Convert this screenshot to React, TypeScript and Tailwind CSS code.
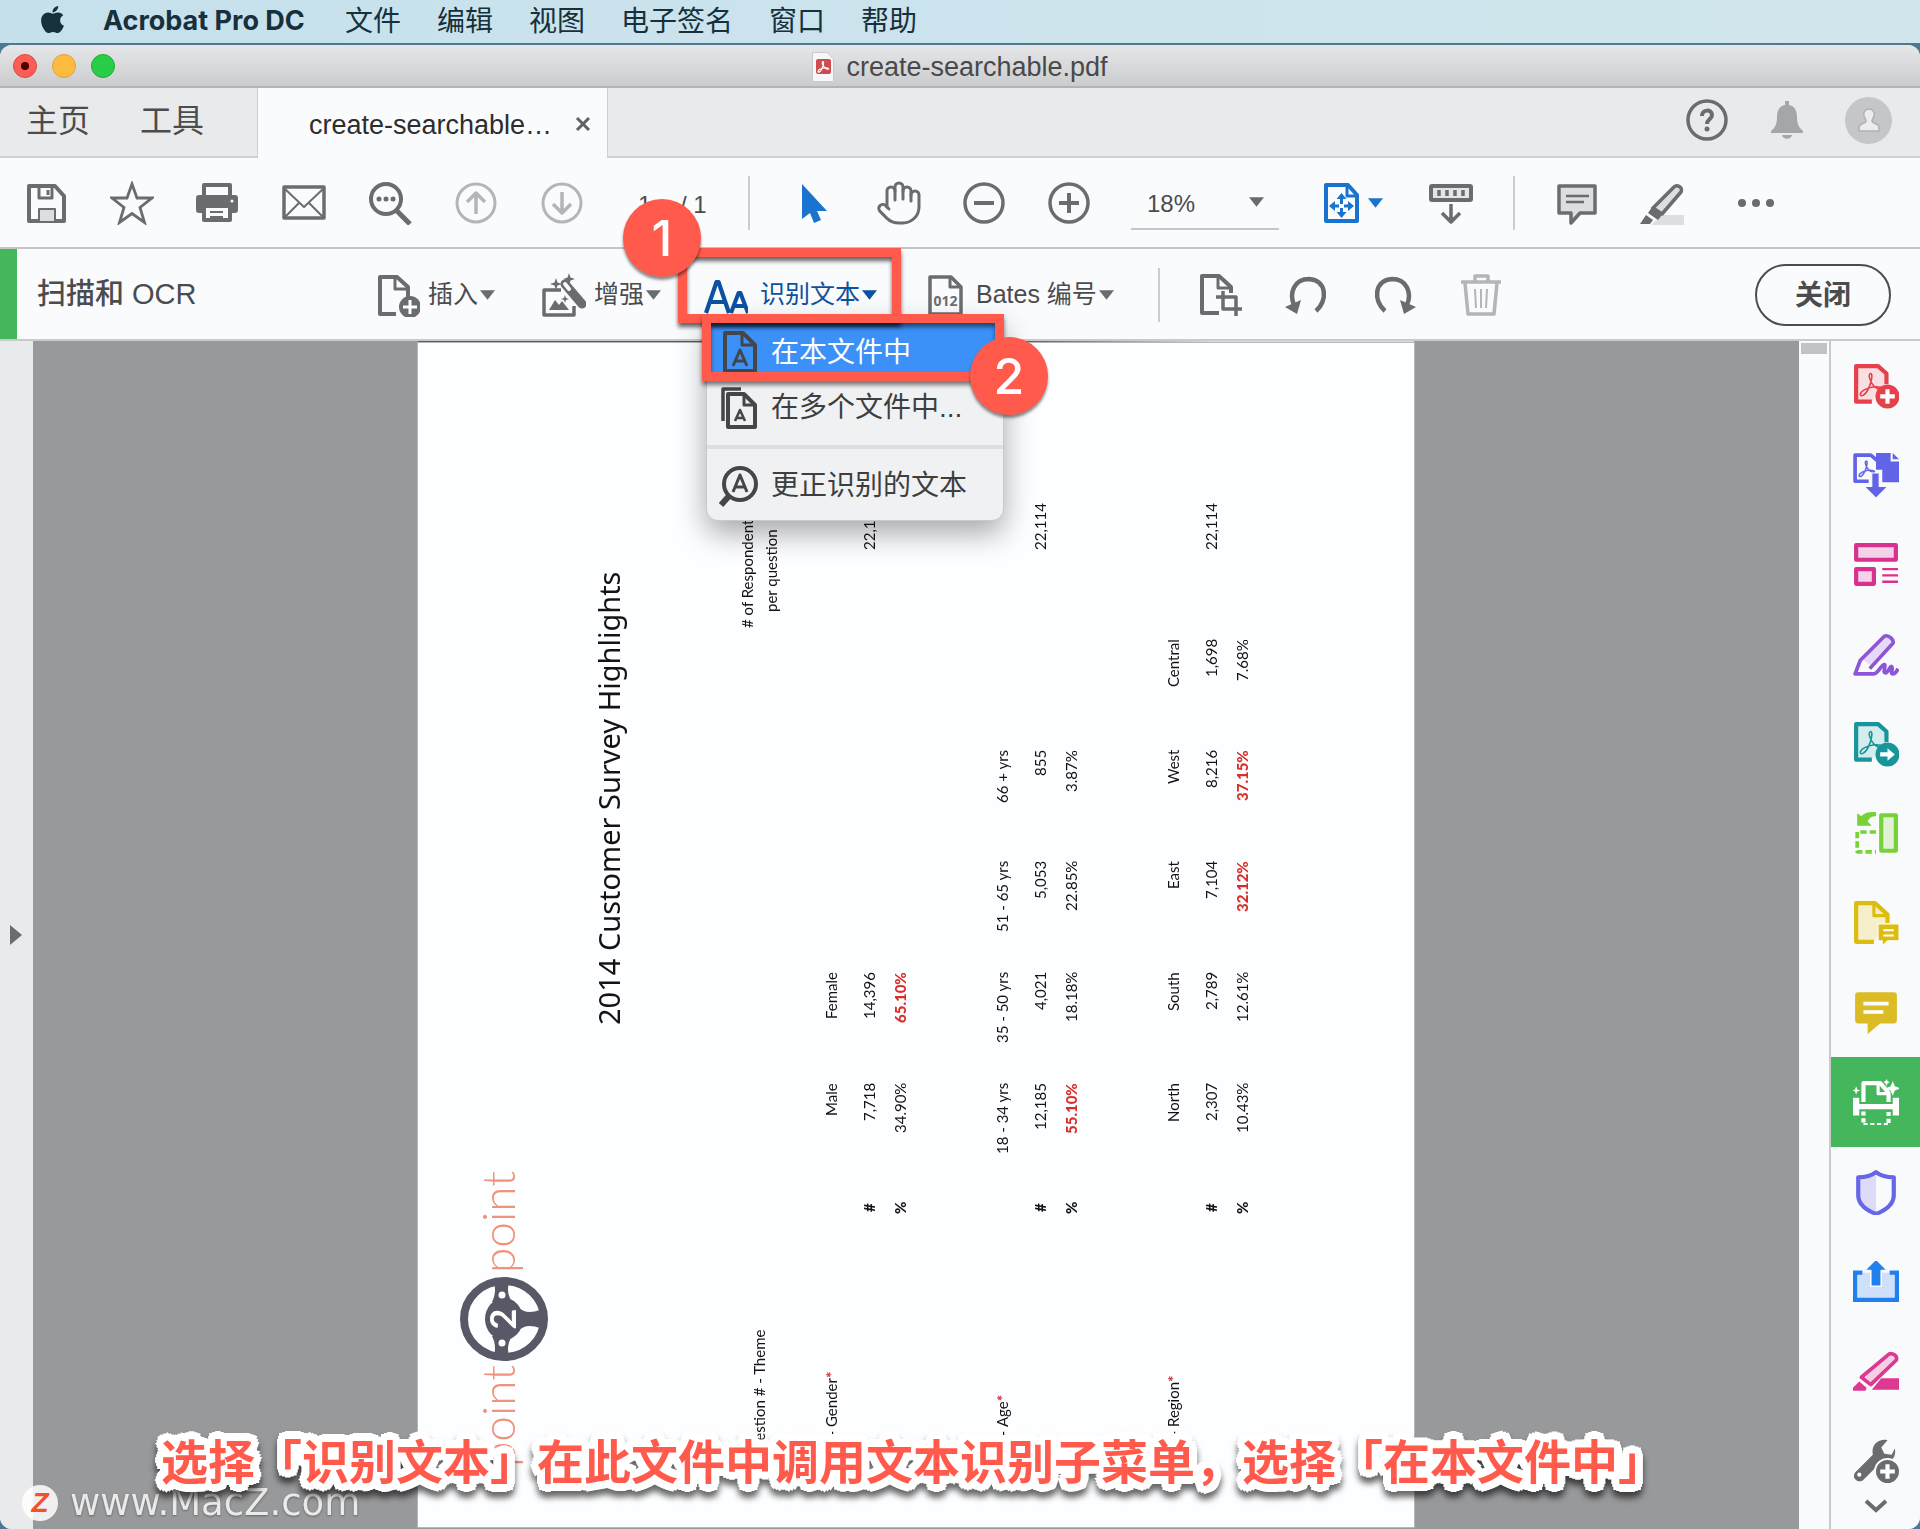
import type { ReactNode } from "react";
import { Hand } from "lucide-react";
import { FaApple } from "react-icons/fa";

const menus = ["文件", "编辑", "视图", "电子签名", "窗口", "帮助"];

function Icon({
	children,
	className = "size-11",
}: {
	children: ReactNode;
	className?: string;
}) {
	return (
		<svg
			viewBox="0 0 44 44"
			fill="none"
			stroke="currentColor"
			strokeWidth="4"
			strokeLinejoin="round"
			aria-hidden="true"
			className={`shrink-0 ${className}`}
		>
			{children}
		</svg>
	);
}

function Caret({ className = "" }: { className?: string }) {
	return (
		<svg
			viewBox="0 0 16 10"
			fill="currentColor"
			aria-hidden="true"
			className={`h-[10px] w-[15px] shrink-0 ${className}`}
		>
			<path d="M0 0h16L8 10z" />
		</svg>
	);
}

function IconButton({
	label,
	children,
	className = "",
}: {
	label: string;
	children: ReactNode;
	className?: string;
}) {
	return (
		<button
			type="button"
			aria-label={label}
			className={`flex shrink-0 items-center justify-center ${className}`}
		>
			{children}
		</button>
	);
}

// Acrobat の三つ葉マーク
const trefoil =
	"M14 5c-3 0-1 8 3 12 3 3 7 4 8 3s-3-3-9-2c-6 1-12 4-12 7s5 1 8-6c3-6 4-14 2-14z";

function MenuBar() {
	return (
		<header className="flex h-[43px] items-center bg-gradient-to-r from-[#c6e1ec] to-[#d1e6ec] pl-[37px] text-[#16303c]">
			<FaApple className="mb-1 size-[31px]" aria-hidden="true" />
			<span className="ml-[35px] w-[242px] font-[Inter,'Liberation_Sans',sans-serif] text-[27px] font-bold whitespace-nowrap">
				Acrobat Pro DC
			</span>
			<nav className="flex gap-9 text-[28px] whitespace-nowrap">
				{menus.map((m) => (
					<button key={m} type="button">
						{m}
					</button>
				))}
			</nav>
		</header>
	);
}

function TitleBar() {
	return (
		<div className="grid h-[43px] grid-cols-[1fr_auto_1fr] items-center border-b-2 border-[#b3b4b6] bg-gradient-to-b from-[#e6e7e8] to-[#cbccce]">
			<div className="flex gap-[15px] pl-[13px]">
				<button
					type="button"
					aria-label="关闭窗口"
					className="flex size-6 items-center justify-center rounded-full border border-[#e0473f] bg-[#fc5d57]"
				>
					<span className="size-2 rounded-full bg-[#4d0000]" />
				</button>
				<button
					type="button"
					aria-label="最小化"
					className="size-6 rounded-full border border-[#e0a135] bg-[#fdbc3f]"
				/>
				<button
					type="button"
					aria-label="缩放"
					className="size-6 rounded-full border border-[#1eab33] bg-[#28cd48]"
				/>
			</div>
			<div className="flex items-center gap-3 pt-0.5 text-[27px] leading-8 text-[#48494b]">
				<svg viewBox="0 0 22 30" className="h-[30px] w-[22px]" aria-hidden="true">
					<path d="M.5.5h15l6 7v22H.5z" fill="#f7f7f7" stroke="#c9c9cb" />
					<rect x="4" y="7" width="15" height="15" rx="2" fill="#cf4b4e" />
					<path
						d={trefoil}
						transform="translate(4 7) scale(.5)"
						fill="none"
						stroke="#fff"
						strokeWidth="2.5"
					/>
				</svg>
				<h1>create-searchable.pdf</h1>
			</div>
			<div />
		</div>
	);
}

function TabBar() {
	return (
		<div className="flex h-[70px] bg-[#e9eaec]">
			<div className="flex w-[257px] shrink-0 items-center gap-[50px] border-b-2 border-[#d0d1d3] pb-0.5 pl-[26px] text-[32px] text-[#4b4c4e]">
				<button type="button">主页</button>
				<button type="button">工具</button>
			</div>
			<div className="flex w-[351px] shrink-0 items-center border-x border-[#cfd0d2] bg-[#fafbfc] pt-1 pl-[51px] text-[27px] text-[#2c2d2f]">
				<span>create-searchable…</span>
				<button type="button" aria-label="关闭标签页" className="mr-4 ml-auto pb-0.5">
					<svg
						viewBox="0 0 16 16"
						className="size-4"
						stroke="#616264"
						strokeWidth="3"
						aria-hidden="true"
					>
						<path d="M2 2l12 12M14 2L2 14" />
					</svg>
				</button>
			</div>
			<div className="flex flex-1 items-center justify-end gap-9 border-b-2 border-[#d0d1d3] pr-7 pb-1 text-[#6b6c6f]">
				<IconButton label="帮助">
					<Icon>
						<circle cx="22" cy="22" r="19" strokeWidth="3.5" />
						<path
							d="M17 18c0-7 10-7 10-1 0 4-5 4-5 9"
							strokeWidth="4"
							strokeLinejoin="miter"
						/>
						<circle cx="22" cy="31" r="2.5" fill="currentColor" stroke="none" />
					</Icon>
				</IconButton>
				<IconButton label="通知" className="text-[#a5a6a9]">
					<Icon>
						<path
							d="M20 3h4v4c6 1 8 6 8 12 0 7 2 11 6 14v2H6v-2c4-3 6-7 6-14 0-6 2-11 8-12zM17 37h10c-1 5-9 5-10 0z"
							fill="currentColor"
							stroke="none"
						/>
					</Icon>
				</IconButton>
				<IconButton label="账户">
					<span className="flex size-[47px] items-center justify-center rounded-full bg-[#c5c6c8]">
						<svg viewBox="0 0 24 26" className="h-[26px] w-6" aria-hidden="true">
							<path
								d="M12 2c4 0 6 3 5 7-.6 2.500-2 3-2 5 0 3 7 2 7 6v4H2v-4c0-4 7-3 7-6 0-2-1.400-2.500-2-5-1-4 1-7 5-7z"
								fill="#ececee"
								stroke="#b0b1b3"
								strokeWidth="1.500"
							/>
						</svg>
					</span>
				</IconButton>
			</div>
		</div>
	);
}

function Divider({ className = "" }: { className?: string }) {
	return <div className={`h-[54px] w-0.5 shrink-0 bg-[#cbccce] ${className}`} />;
}

function Toolbar() {
	return (
		<div className="flex h-[91px] items-center border-b-2 border-[#c4c5c7] bg-[#fafbfd] pl-6 text-[#6b6c6f]">
			<div className="flex gap-[42px]">
				<IconButton label="保存">
					<Icon>
						<path d="M5 5h26l9 10v25H5z" />
						<path d="M15 5v12h13V5M24 9v5" strokeWidth="3" />
						<path d="M15 40V28h16v12" fill="#dddee0" strokeWidth="2" />
					</Icon>
				</IconButton>
				<IconButton label="收藏">
					<Icon>
						<path
							d="M22 3l5 14h15L30 26.500l4.500 15L22 32.500 9.500 41.500l4.500-15L2 17h15z"
							strokeWidth="2.800"
							strokeLinejoin="miter"
						/>
					</Icon>
				</IconButton>
				<IconButton label="打印">
					<Icon>
						<path d="M8 18V4h26v14" />
						<rect x="0" y="14" width="42" height="18" rx="3" fill="currentColor" stroke="none" />
						<path d="M8 25h26v14H8z" fill="#fafbfd" />
						<path d="M14 31h13M14 36h13" strokeWidth="2" />
						<circle cx="36" cy="20" r="1.500" fill="#fff" stroke="none" />
					</Icon>
				</IconButton>
				<IconButton label="电子邮件">
					<Icon>
						<rect x="2" y="6" width="40" height="31" strokeWidth="3.500" />
						<path d="M3 8l19 18L41 8M3 36l14-14M41 36L27 22" strokeWidth="2" />
					</Icon>
				</IconButton>
				<IconButton label="查找">
					<Icon>
						<circle cx="18" cy="18" r="15" />
						<path d="M28 29l14 14" strokeWidth="5" />
						<g fill="currentColor" stroke="none">
							<circle cx="11" cy="18" r="2.500" />
							<circle cx="18" cy="18" r="2.500" />
							<circle cx="25" cy="18" r="2.500" />
						</g>
					</Icon>
				</IconButton>
				<IconButton label="上一页" className="text-[#b4b5b7]">
					<Icon>
						<circle cx="22" cy="22" r="19" strokeWidth="3" />
						<path d="M22 33V13M13 21l9-9 9 9" strokeWidth="3.500" />
					</Icon>
				</IconButton>
				<IconButton label="下一页" className="text-[#b4b5b7]">
					<Icon>
						<circle cx="22" cy="22" r="19" strokeWidth="3" />
						<path d="M22 11v20M13 23l9 9 9-9" strokeWidth="3.500" />
					</Icon>
				</IconButton>
			</div>
			<div className="ml-[54px] flex w-[110px] items-center pt-1 text-[24px] text-[#4b4c4e]">
				<input
					aria-label="页码"
					defaultValue="1"
					className="w-[42px] bg-transparent"
				/>
				<span>/ 1</span>
			</div>
			<Divider />
			<div className="ml-[42px] flex gap-[41px]">
				<IconButton label="选择工具" className="text-[#1a73cf]">
					<Icon>
						<path
							d="M10 3v35l8-6 4 10 7-3-4-9h10z"
							fill="currentColor"
							stroke="none"
						/>
					</Icon>
				</IconButton>
				<IconButton label="手形工具">
					<Hand className="-mx-0.5 size-[48px]" strokeWidth={1.5} />
				</IconButton>
				<IconButton label="缩小">
					<Icon>
						<circle cx="22" cy="22" r="19" strokeWidth="3.500" />
						<path d="M12 22h20" />
					</Icon>
				</IconButton>
				<IconButton label="放大">
					<Icon>
						<circle cx="22" cy="22" r="19" strokeWidth="3.500" />
						<path d="M12 22h20M22 12v20" />
					</Icon>
				</IconButton>
			</div>
			<div className="ml-10 grid h-[54px] w-[148px] shrink-0 grid-cols-[1fr_auto] items-center border-b-2 border-[#c4c5c7] pr-[15px]">
				<select
					aria-label="缩放比例"
					className="col-span-2 col-start-1 row-start-1 w-full appearance-none bg-transparent pt-1 pl-4 text-[24px] text-[#4b4c4e]"
				>
					<option>18%</option>
				</select>
				<span className="pointer-events-none col-start-2 row-start-1">
					<Caret />
				</span>
			</div>
			<button
				type="button"
				aria-label="适合页面"
				className="ml-[41px] flex shrink-0 items-center gap-1 text-[#1a73cf]"
			>
				<Icon>
					<path d="M6 4h22l9 10v26H6z" />
					<path d="M27 4v11h10" strokeWidth="3" />
					<g fill="currentColor" stroke="none">
						<path d="M21.500 12l5 6h-3.500v5h-3v-5h-3.500zM21.500 37l5-6h-3.500v-4h-3v4h-3.500zM9 25l6-5v3.500h4v3h-4V30zM34 25l-6-5v3.500h-4v3h4V30z" />
					</g>
				</Icon>
				<Caret />
			</button>
			<IconButton label="滚动模式" className="ml-[46px]">
				<Icon>
					<rect x="2" y="5" width="40" height="14" rx="1" fill="#e4e5e7" />
					<path d="M10 9v6M18 9v6M26 9v6M34 9v6" strokeWidth="3.500" />
					<path d="M22 23v18M13 32l9 9 9-9" strokeWidth="3.500" />
				</Icon>
			</IconButton>
			<Divider className="ml-10" />
			<IconButton label="添加附注" className="ml-10">
				<Icon>
					<path d="M4 5h36v27H25l-9 10V32H4z" fill="#dddee0" strokeWidth="3.500" />
					<path d="M11 15h23M11 21h18" strokeWidth="2.500" />
				</Icon>
			</IconButton>
			<IconButton label="高亮文本" className="ml-[41px]">
				<Icon>
					<path d="M22 34h22v10H11z" fill="#dddee0" stroke="none" />
					<path d="M34 6c3-3 9 0 7 5L22 33l-9-6z" fill="#dddee0" strokeWidth="3.500" />
					<path d="M12 26l10 8-4 5-10-7zM6 34l7 5-3 4H0z" fill="currentColor" stroke="none" />
				</Icon>
			</IconButton>
			<IconButton label="更多" className="ml-[50px]">
				<Icon>
					<g fill="currentColor" stroke="none">
						<circle cx="8" cy="22" r="4" />
						<circle cx="22" cy="22" r="4" />
						<circle cx="36" cy="22" r="4" />
					</g>
				</Icon>
			</IconButton>
		</div>
	);
}

function Badge({ n, className }: { n: number; className: string }) {
	return (
		<span
			className={`absolute z-30 flex size-[78px] items-center justify-center rounded-full bg-[#ff5a4c] font-[Inter,'Liberation_Sans',sans-serif] text-[50px] font-medium text-white shadow-[0_3px_3px_rgba(0,0,0,0.45)] ${className}`}
		>
			{n}
		</span>
	);
}

function RecognizeMenu() {
	return (
		<div className="absolute top-[69px] left-[2px] z-10 w-[298px] rounded-b-xl border border-[#c9cacc] bg-[#f0f1f3] pb-[7px] text-[28px] leading-8 whitespace-nowrap text-[#3d3e40] shadow-[0_12px_30px_rgba(0,0,0,0.35)]">
			<button
				type="button"
				className="flex h-[62px] w-full items-center gap-2 bg-[#3b91f8] pt-1.5 pl-3 text-white"
			>
				<Icon className="mb-1 size-11 text-[#454648]">
					<path d="M6 4h18l12 12v26H6z" />
					<path d="M23 4v12h13" strokeWidth="3" />
					<path d="M14 37l7-16 7 16M17 32h9" strokeWidth="3" />
				</Icon>
				在本文件中
			</button>
			<button
				type="button"
				className="flex h-[54px] w-full items-center gap-2 pl-3"
			>
				<Icon className="size-11 text-[#454648]">
					<path d="M4 35V3h18" strokeWidth="3.500" />
					<path d="M9 8h16l11 11v22H9z" />
					<path d="M25 8v11h11" strokeWidth="3" />
					<path d="M16 35l5-11 5 11M18 32h7" strokeWidth="2.500" />
				</Icon>
				在多个文件中...
			</button>
			<hr className="my-[10px] h-1 border-0 bg-[#dedfe1]" />
			<button
				type="button"
				className="flex h-[54px] w-full items-center gap-2 pl-3"
			>
				<Icon className="size-11 text-[#454648]">
					<circle cx="21" cy="20" r="16" />
					<path d="M10 32L2 41" strokeWidth="6" />
					<path d="M14 28l7-17 7 17M17 23h8" strokeWidth="3" />
				</Icon>
				更正识别的文本
			</button>
		</div>
	);
}

function OcrBar() {
	const gray = "text-[#6b6c6f]";
	return (
		<div className="flex h-[92px] border-b-2 border-[#c9cacc] bg-[#fafbfd] text-[25px] whitespace-nowrap text-[#4b4c4e]">
			<div className="w-[17px] shrink-0 bg-[#44b65b]" />
			<div className="flex flex-1 items-center pt-0.5 pr-[29px] pl-5">
				<h2 className="w-[339px] shrink-0 text-[29px] font-medium">扫描和 OCR</h2>
				<button type="button" className="flex w-[166px] shrink-0 items-center">
					<Icon className={`mr-2 size-11 ${gray}`}>
						<path d="M20 41H4V4h17l11 10v10" />
						<path d="M19 4v12h13" strokeWidth="3" />
						<circle cx="34" cy="34" r="11" fill="currentColor" stroke="none" />
						<path d="M34 27v14M27 34h14" stroke="#fff" strokeWidth="3" />
					</Icon>
					插入
					<Caret className={`ml-0.5 ${gray}`} />
				</button>
				<button type="button" className="flex w-[162px] shrink-0 items-center">
					<Icon className={`mr-2 size-11 ${gray}`}>
						<path d="M19 17H2v25h30v-9" strokeWidth="3.500" />
						<path d="M7 37l6-10 4 5 3-4 7 9z" fill="currentColor" stroke="none" />
						<path d="M23 11l17 20" strokeWidth="9" strokeLinecap="round" />
						<path d="M23 11l4 5" stroke="#fafbfd" strokeWidth="4" strokeLinecap="round" />
						<path
							d="M27 0l1.500 4.500L33 6l-4.500 1.500L27 12l-1.500-4.500L21 6l4.500-1.500zM14 5l1.500 4.500L20 11l-4.500 1.500L14 17l-1.500-4.500L8 11l4.500-1.500zM23 22l1 3 3 1-3 1-1 3-1-3-3-1 3-1z"
							fill="currentColor"
							stroke="none"
						/>
					</Icon>
					增强
					<Caret className={`ml-0.5 ${gray}`} />
				</button>
				<div className="relative -mt-0.5 flex w-[222px] shrink-0 self-stretch text-[#0d52a0]">
					<button type="button" className="flex items-center pt-0.5">
						<Icon className="mr-3 size-11">
							<path d="M2 40L12.500 9h2L25 40M6 29h15" strokeWidth="4.200" />
							<path d="M27 40l7.500-20h2L44 40M30 33h11" strokeWidth="4" />
						</Icon>
						识别文本
						<Caret className="ml-0.5" />
					</button>
					<RecognizeMenu />
					<span className="pointer-events-none absolute -top-px -left-[26px] z-20 h-[75px] w-[223px] border-[9px] border-[#ff5a4c] drop-shadow-[0_4px_2px_rgba(0,0,0,0.6)]" />
					<span className="pointer-events-none absolute top-[65px] -left-0.5 z-20 h-[67px] w-[302px] border-[9px] border-[#ff5a4c] drop-shadow-[0_4px_2px_rgba(0,0,0,0.5)]" />
					<Badge n={1} className="-top-[50px] -left-[81px]" />
					<Badge n={2} className="top-[88px] left-[266px]" />
				</div>
				<button type="button" className="flex shrink-0 items-center">
					<Icon className={`mr-1.5 size-11 ${gray}`}>
						<path d="M4 4h21l10 10v27H4z" strokeWidth="3.500" />
						<path d="M24 4v10h11" strokeWidth="3" />
						<text
							x="19.500"
							y="33"
							textAnchor="middle"
							fill="currentColor"
							stroke="none"
							className="font-['Noto_Sans',sans-serif] text-[14px] font-bold"
						>
							012
						</text>
					</Icon>
					Bates 编号
					<Caret className={`ml-0.5 ${gray}`} />
				</button>
				<Divider className="ml-11" />
				<div className={`ml-[38px] flex gap-[43px] pb-0.5 ${gray}`}>
					<IconButton label="裁剪页面">
						<Icon>
							<path d="M21 41H4V4h17l12 11v6" />
							<path d="M20 4v12h13" strokeWidth="3" />
							<path d="M25 19v18h19M18 25h20v19" strokeWidth="3.500" />
						</Icon>
					</IconButton>
					<IconButton label="逆时针旋转">
						<Icon>
							<path d="M31 39C43 29 42 8 24 7 9 7 4 21 9 33" strokeWidth="4.500" />
							<path d="M0 35l16-7-4 14z" fill="currentColor" stroke="none" />
						</Icon>
					</IconButton>
					<IconButton label="顺时针旋转">
						<Icon>
							<path d="M13 39C1 29 2 8 20 7c15 0 20 14 15 26" strokeWidth="4.500" />
							<path d="M44 35l-16-7 4 14z" fill="currentColor" stroke="none" />
						</Icon>
					</IconButton>
					<IconButton label="删除页面" className="text-[#b4b5b7]">
						<Icon>
							<path d="M2 10h40M16 9V4h13v5M6 11l3 31h26l3-31" strokeWidth="3.500" />
							<path d="M16 17l1 19M22 17v19M28 17l-1 19" strokeWidth="2" />
						</Icon>
					</IconButton>
				</div>
				<button
					type="button"
					className="ml-auto h-[62px] w-[136px] shrink-0 rounded-full border-2 border-[#4b4c4e] pt-0.5 text-[28px] font-bold"
				>
					关闭
				</button>
			</div>
		</div>
	);
}

type Cell = { head: string; count: string; pct: string; hot?: boolean };
const none: Cell = { head: "", count: "", pct: "" };

const questions: { no: number; name: string; cells: Cell[] }[] = [
	{
		no: 1,
		name: "Gender",
		cells: [
			{ head: "Male", count: "7,718", pct: "34.90%" },
			{ head: "Female", count: "14,396", pct: "65.10%", hot: true },
			none,
			none,
			none,
		],
	},
	{
		no: 2,
		name: "Age",
		cells: [
			{ head: "18 - 34 yrs", count: "12,185", pct: "55.10%", hot: true },
			{ head: "35 - 50 yrs", count: "4,021", pct: "18.18%" },
			{ head: "51 - 65 yrs", count: "5,053", pct: "22.85%" },
			{ head: "66 + yrs", count: "855", pct: "3.87%" },
			none,
		],
	},
	{
		no: 3,
		name: "Region",
		cells: [
			{ head: "North", count: "2,307", pct: "10.43%" },
			{ head: "South", count: "2,789", pct: "12.61%" },
			{ head: "East", count: "7,104", pct: "32.12%", hot: true },
			{ head: "West", count: "8,216", pct: "37.15%", hot: true },
			{ head: "Central", count: "1,698", pct: "7.68%" },
		],
	},
];

function Wheel() {
	return (
		<svg
			viewBox="0 0 88 84"
			className="h-[84px] w-[88px] shrink-0 rotate-180"
			aria-hidden="true"
		>
			<ellipse cx="44" cy="42" rx="40" ry="38" fill="none" stroke="#595867" strokeWidth="8" />
			<ellipse cx="44" cy="42" rx="19" ry="21" fill="#595867" />
			<path
				d="M34 5h15c-2 8-1 13 3 20H32c3-6 4-12 2-20zM34 79h15c-2-8-1-13 3-20H32c3 6 4 12 2 20zM58 30c6 6 13 6 22 3v18c-9-3-16-3-22 3z"
				fill="#595867"
			/>
			<circle cx="42" cy="18" r="3.500" fill="#fdfeff" />
			<circle cx="42" cy="66" r="3.500" fill="#fdfeff" />
			<text
				x="0"
				y="0"
				transform="translate(56 42) rotate(-90)"
				textAnchor="middle"
				fill="#fff"
				className="font-[Lato,sans-serif] text-[36px] font-bold [writing-mode:horizontal-tb]"
			>
				2
			</text>
		</svg>
	);
}

// 横向きにスキャンされたページ。縦書き + 180度回転で下から上へ読む
function ScannedPage() {
	return (
		<article className="mb-0.5 w-[996px] shrink-0 rotate-180 overflow-hidden bg-[#fdfeff] pt-[60px] pr-9 font-[Lato,'Noto_Sans',sans-serif] text-[15px] text-[#151213] shadow-[0_0_0_1px_#b5b6b8] [writing-mode:vertical-rl]">
			<div className="flex w-[100px] items-center gap-1 text-[46px] leading-none font-light text-[#f0937d]">
				<span className="pl-3">point</span>
				<Wheel />
				<span className="pl-3">point</span>
			</div>
			<h2 className="mr-[35px] w-10 pt-[442px] font-['Noto_Sans',sans-serif] text-[29px] leading-10 whitespace-nowrap">
				2014 Customer Survey Highlights
			</h2>
			<table className="mr-[100px] border-collapse leading-6 whitespace-nowrap">
				<thead>
					<tr>
						<th className="h-[246px] w-[60px] p-0 pt-1.5 text-start align-middle font-normal">
							Question # - Theme
						</th>
						<td className="h-[27px] p-0" />
						<td colSpan={5} className="p-0" />
						<th className="h-[136px] p-0 text-center align-middle font-normal">
							# of Respondents
							<br />
							per question
						</th>
					</tr>
					<tr aria-hidden="true">
						<td colSpan={8} className="w-5 p-0" />
					</tr>
				</thead>
				{questions.map((q) => (
					<tbody key={q.no}>
						<tr>
							<th className="w-11 p-0 pt-[18px] text-start align-middle font-normal">
								{q.no} - {q.name}
								<span className="font-black text-[#d6333a]">*</span>
							</th>
							<td className="p-0" />
							{q.cells.map((c, i) => (
								<th
									key={i}
									className="h-[111px] p-0 text-end align-middle font-normal"
								>
									{c.head}
								</th>
							))}
							<td className="p-0" />
						</tr>
						<tr>
							<td className="w-[31px] p-0" />
							<th className="p-0 text-center align-middle font-black">#</th>
							{q.cells.map((c, i) => (
								<td key={i} className="p-0 text-end align-middle">
									{c.count}
								</td>
							))}
							<td className="p-0 text-end align-middle">22,114</td>
						</tr>
						<tr>
							<td className="w-[31px] p-0" />
							<th className="p-0 text-center align-middle font-black">%</th>
							{q.cells.map((c, i) => (
								<td
									key={i}
									className={
										c.hot
											? "p-0 text-end align-middle font-black text-[#d92f2a]"
											: "p-0 text-end align-middle"
									}
								>
									{c.pct}
								</td>
							))}
							<td className="p-0" />
						</tr>
						<tr aria-hidden="true">
							<td colSpan={8} className="w-[65px] p-0" />
						</tr>
					</tbody>
				))}
			</table>
		</article>
	);
}

const tools: { label: string; tone: string; art: ReactNode }[] = [
	{
		label: "创建 PDF",
		tone: "text-[#e5404b]",
		art: (
			<>
				<path d="M18 37H3V3h21l8 7v10" fill="#f9dfe1" />
				<path d={trefoil} transform="translate(3 5)" strokeWidth="1.500" />
				<circle cx="33" cy="32" r="11.500" fill="currentColor" stroke="none" />
				<path d="M33 25v14M26 32h14" stroke="#fff" />
			</>
		),
	},
	{
		label: "合并文件",
		tone: "text-[#6264e8]",
		art: (
			<>
				<path d="M15 28H2V3h15l6 5" strokeWidth="3.500" />
				<path d={trefoil} transform="translate(3 5) scale(.7)" strokeWidth="2" />
				<path d="M22 1h14v8h8v20H28V17h-6zM38 1l6 6h-6z" fill="currentColor" stroke="none" />
				<path d="M18 20h7v13h8L22 44 11 33h7z" fill="currentColor" stroke="#f9fafb" strokeWidth="1" />
			</>
		),
	},
	{
		label: "整理页面",
		tone: "text-[#d9318f]",
		art: (
			<>
				<rect x="3" y="3" width="38" height="14" fill="#f2d3e8" />
				<rect x="3" y="26" width="17" height="14" fill="#f2d3e8" />
				<path d="M28 26h15M28 32h15M28 38h15" strokeWidth="2.200" />
			</>
		),
	},
	{
		label: "填写和签名",
		tone: "text-[#8d56d8]",
		art: (
			<>
				<path d="M9 27L29 4c3-3 11 3 8 7L17 33z" fill="#e6daf6" stroke="none" />
				<path
					d="M16 36l22-24c2-3-4-9-8-7L7 28 2 41h18c4 0 7-9 10-9 2 0-2 8 1 8s4-7 6-6-2 7 1 7 4-3 5-5"
					strokeWidth="3.500"
				/>
			</>
		),
	},
	{
		label: "导出 PDF",
		tone: "text-[#16959a]",
		art: (
			<>
				<path d="M18 37H3V3h21l8 7v10" fill="#d3edee" />
				<path d={trefoil} transform="translate(3 5)" strokeWidth="1.500" />
				<circle cx="33" cy="32" r="11.500" fill="currentColor" stroke="none" />
				<path d="M26 30h7v-4l7 6-7 6v-4h-7z" fill="#fff" stroke="none" />
			</>
		),
	},
	{
		label: "组织页面",
		tone: "text-[#77d238]",
		art: (
			<>
				<rect x="27" y="5" width="14" height="34" fill="#e0f1d6" />
				<path d="M22 21H4v19h18" strokeDasharray="6 3" strokeWidth="3.500" />
				<path d="M4 3l4 3c4-4 8-4 14-4v4c-4 0-6 1-8 5l4 4H4z" fill="currentColor" stroke="none" />
			</>
		),
	},
	{
		label: "发送以供注释",
		tone: "text-[#dcbc0c]",
		art: (
			<>
				<path d="M20 40H3V3h18l12 11v8" fill="#f5efcb" />
				<path d="M20 3v12h13" strokeWidth="3" />
				<path d="M24 23h20v16H33l-5 5v-5h-4z" fill="currentColor" stroke="#fafbfb" strokeWidth="1" />
				<path d="M29 29h10M29 34h10" stroke="#fff" strokeWidth="2" />
			</>
		),
	},
	{
		label: "注释",
		tone: "text-[#dcbc25]",
		art: (
			<>
				<path
					d="M5 3h34q3 0 3 3v24q0 3-3 3H26L14 43V33H5q-3 0-3-3V6q0-3 3-3z"
					fill="currentColor"
					stroke="none"
				/>
				<path d="M10 14h24M10 22h19" stroke="#fff" strokeWidth="3.500" />
			</>
		),
	},
	{
		label: "扫描和 OCR",
		tone: "bg-[#44b65b] text-white",
		art: (
			<>
				<path d="M10 22V4h16l8 9v9" />
				<path d="M24 4v10h10" strokeWidth="3" />
				<path d="M0 18h6v6h32v-6h6v17h-6v-6H6v6H0z" fill="currentColor" stroke="none" />
				<path d="M10 31v13h24V31" strokeDasharray="4 2.500" />
				<path d="M38 2l2 5 6 2-6 2-2 5-2-5-5-2 5-2zM32 0l1 2 2 1-2 1-1 3-1-3-2-1 2-1zM3 7l1 3 3 1-3 1-1 3-1-3-3-1 3-1z" fill="currentColor" stroke="none" />
			</>
		),
	},
	{
		label: "保护",
		tone: "text-[#6667e8]",
		art: (
			<>
				<path d="M22 3v40C12 39 5 33 5 25V8c7 0 12-1 17-5z" fill="#dcdcf8" stroke="none" />
				<path d="M22 3c5 4 10 5 17 5v17c0 8-7 14-17 18C12 39 5 33 5 25V8c7 0 12-1 17-5z" />
			</>
		),
	},
	{
		label: "共享",
		tone: "text-[#2080ee]",
		art: (
			<>
				<path d="M9 14H2v26h40V14h-7" fill="#cfe1fa" strokeLinejoin="miter" />
				<path d="M17 27V12h-6L22 1l11 11h-6v15z" fill="currentColor" stroke="#fafbfb" strokeWidth="1.500" />
			</>
		),
	},
	{
		label: "标记密文",
		tone: "text-[#dc3a92]",
		art: (
			<>
				<path d="M33 7c4-4 11 1 8 5L17 35l-9-7z" fill="#f5d0e5" strokeWidth="3.500" />
				<path d="M27 29h17v11H18zM6 32l7 6-1 3H0v-3z" fill="currentColor" stroke="none" />
			</>
		),
	},
	{
		label: "更多工具",
		tone: "text-[#6b6c6f]",
		art: (
			<>
				<path
					d="M33 3l-6 7 3 6 7 1 3-6c2 9-5 15-13 13L10 41c-4 4-12-1-8-7l17-17c-2-9 5-16 14-14z"
					fill="currentColor"
					stroke="none"
				/>
				<circle cx="6" cy="36" r="2" fill="#fff" stroke="none" />
				<circle cx="33" cy="33" r="12" fill="currentColor" stroke="#fafbfb" strokeWidth="2" />
				<path d="M33 26v14M26 33h14" stroke="#fff" />
			</>
		),
	},
];

function ToolRail() {
	return (
		<aside className="flex w-[91px] shrink-0 flex-col border-l-2 border-[#c9cacc] bg-[#f9fafb]">
			{tools.map((t) => (
				<IconButton key={t.label} label={t.label} className={`flex-1 ${t.tone}`}>
					<Icon className="size-[46px]">{t.art}</Icon>
				</IconButton>
			))}
			<IconButton label="展开" className="h-6 pb-[22px] text-[#6b6c6f]">
				<svg
					viewBox="0 0 24 14"
					className="h-[14px] w-6 shrink-0"
					fill="none"
					stroke="currentColor"
					strokeWidth="4"
					aria-hidden="true"
				>
					<path d="M2 2l10 9 10-9" />
				</svg>
			</IconButton>
		</aside>
	);
}

export default function App() {
	return (
		<div className="relative flex min-h-screen flex-col overflow-hidden bg-[#4d7a92] font-['Liberation_Sans','Noto_Sans_CJK_SC',sans-serif]">
			<MenuBar />
			<div className="mt-0.5 flex flex-1 flex-col overflow-hidden rounded-xl bg-[#e9eaec]">
				<TitleBar />
				<TabBar />
				<Toolbar />
				<OcrBar />
				<main className="flex flex-1">
					<button
						type="button"
						aria-label="打开导览窗格"
						className="flex w-[33px] shrink-0 items-center justify-center bg-[#e9eaec]"
					>
						<svg viewBox="0 0 12 20" className="mr-0.5 h-5 w-3" fill="#6b6c6f" aria-hidden="true">
							<path d="M0 0l12 10L0 20z" />
						</svg>
					</button>
					<div className="flex flex-1 justify-center bg-[#98999b]">
						<div className="flex flex-col">
							<div className="h-0.5 bg-gradient-to-r from-[#7d4c44] from-60% to-[#e5dedd] to-80%" />
							<div className="flex flex-1">
								<ScannedPage />
							</div>
						</div>
					</div>
					<div className="w-[30px] shrink-0 bg-[#fafbfc] p-0.5">
						<div className="h-[11px] bg-[#c2c3c5]" />
					</div>
					<ToolRail />
				</main>
			</div>

			{/* 透かし */}
			<div className="absolute bottom-[8px] left-[22px] flex items-center gap-3 text-white/85">
				<span className="flex size-9 items-center justify-center rounded-full bg-white/85 text-[28px] leading-8 font-bold text-[#f4502a] italic">
					Z
				</span>
				<a
					href="#macz"
					className="font-['DejaVu_Sans',sans-serif] text-[37px] leading-8 drop-shadow-[0_1px_1px_rgba(0,0,0,0.4)]"
				>
					www.MacZ.com
				</a>
			</div>

			{/* 手順の説明 */}
			<p className="absolute bottom-[43px] left-[161px] text-[47px] leading-[47px] font-bold whitespace-nowrap text-[#ff5a4c] drop-shadow-[0_6px_3px_rgba(0,0,0,0.6)] [text-shadow:8px_0_white,-8px_0_white,0_8px_white,0_-8px_white,6px_6px_white,-6px_6px_white,6px_-6px_white,-6px_-6px_white,7px_3px_white,-7px_3px_white,7px_-3px_white,-7px_-3px_white,3px_7px_white,-3px_7px_white,3px_-7px_white,-3px_-7px_white,4px_0_white,-4px_0_white,0_4px_white,0_-4px_white]">
				选择「识别文本」在此文件中调用文本识别子菜单，选择「在本文件中」
			</p>
		</div>
	);
}
